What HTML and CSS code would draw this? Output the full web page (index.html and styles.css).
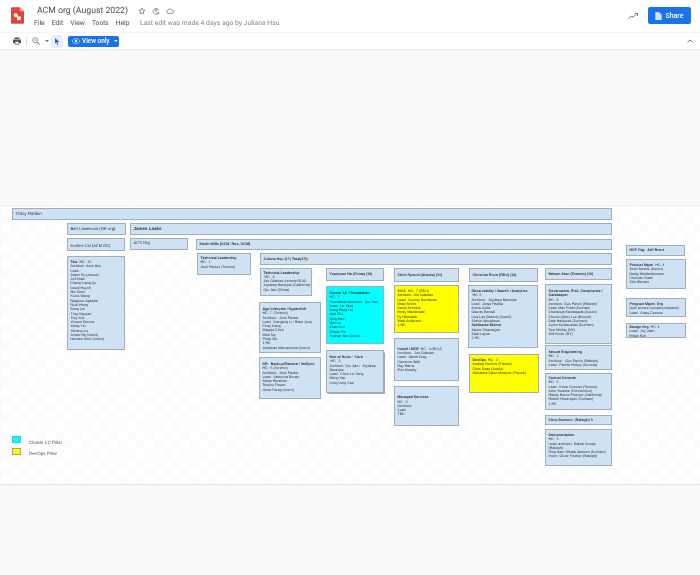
FILE: index.html
```html
<!DOCTYPE html>
<html lang="en">
<head>
<meta charset="utf-8">
<title>ACM org (August 2022)</title>
<link rel="stylesheet" href="styles.css">
</head>
<body>
<header class="topbar">
  <svg class="logo" viewBox="0 0 14 18"><path d="M1.2 0H9.5L14 4.5V16.8C14 17.5 13.5 18 12.8 18H1.2C.5 18 0 17.5 0 16.8V1.2C0 .5.5 0 1.2 0Z" fill="#e0453a"/><path d="M9.5 0L14 4.5H9.5Z" fill="#f2a49c"/><circle cx="5.2" cy="8.8" r="2.1" fill="#fff"/><rect x="6.6" y="10" width="4" height="4" fill="#fff"/></svg>
  <div class="titles">
    <div class="title-row">
      <span class="doc-title">ACM org (August 2022)</span>
      <svg class="t-icon" viewBox="0 0 12 12"><path d="M6 1.4L7.3 4.6 10.7 4.9 8.1 7.1 8.9 10.4 6 8.6 3.1 10.4 3.9 7.1 1.3 4.9 4.7 4.6Z" fill="none" stroke="#5f6368"/></svg>
      <svg class="t-icon" viewBox="0 0 12 12"><path d="M9.5 9.5A4.4 4.4 0 1 1 10.2 5" fill="none" stroke="#5f6368"/><circle cx="6" cy="5" r="1.4" fill="none" stroke="#5f6368"/><path d="M7 9h4M9 7.5v3" stroke="#5f6368"/></svg>
      <svg class="t-icon" viewBox="0 0 12 12"><path d="M3.2 9.5A2.4 2.4 0 0 1 3 4.8 3.2 3.2 0 0 1 9 4.9 2.3 2.3 0 0 1 9 9.5Z" fill="none" stroke="#5f6368"/></svg>
    </div>
    <div class="menu-row">
      <nav class="menu"><span>File</span><span>Edit</span><span>View</span><span>Tools</span><span>Help</span></nav>
      <span class="last-edit">Last edit was made 4 days ago by Juliana Hsu</span>
    </div>
  </div>
  <div class="top-right">
    <svg class="trend" viewBox="0 0 12 8"><path d="M.5 7L3.5 4 5.5 5.5 9 2M7.5 1.2H10.5V4" fill="none" stroke="#5f6368"/></svg>
    <button class="share"><svg class="share-icon" viewBox="0 0 8 10"><path d="M0 0H4.5L8 3.5V10H0Z" fill="#cfe0fb"/></svg>Share</button>
  </div>
</header>
<div class="toolbar">
  <svg class="print" viewBox="0 0 10 9"><path d="M2 0H8V2H2ZM0 2.6H10V7H8V9H2V7H0Z" fill="#50545a"/><rect x="3" y="5.5" width="4" height="2.5" fill="#fff"/></svg>
  <span class="sep"></span>
  <svg class="zoom" viewBox="0 0 9 9"><circle cx="3.6" cy="3.6" r="2.8" fill="none" stroke="#80868b"/><path d="M5.8 5.8L8.6 8.6" stroke="#80868b" stroke-width="1.2"/><path d="M2.2 3.6H5" stroke="#80868b" stroke-width=".7"/></svg>
  <span class="caret"></span>
  <span class="pointer"><svg viewBox="0 0 7 9"><path d="M1 0L6.5 5H3.8L5.2 8.2 4 8.8 2.7 5.6 1 7.2Z" fill="#1a5fc4"/></svg></span>
  <button class="view-only"><svg viewBox="0 0 10 7"><path d="M5 .5C7.3.5 9 2 9.8 3.5 9 5 7.3 6.5 5 6.5S1 5 .2 3.5C1 2 2.7.5 5 .5Z" fill="none" stroke="#e8f0fe" stroke-width=".8"/><circle cx="5" cy="3.5" r="1.5" fill="#e8f0fe"/></svg>View only<span class="caret white"></span></button>
  <svg class="chev" viewBox="0 0 8 5"><path d="M.8 4.2L4 1 7.2 4.2" fill="none" stroke="#5f6368" stroke-width="1.3"/></svg>
</div>
<main class="stage">
  <section class="sheet">
    <div class="node mid big n-tracy"><b class="plain">Tracy Rankin</b></div>
    <div class="node mid n-ben"><b class="plain">Ben Lowenson (GE org)</b></div>
    <div class="node mid big n-james"><b>James Laaks</b></div>
    <div class="node end n-eveline"><b class="plain">Eveline Cal (ACM GE)</b></div>
    <div class="node n-acm">ACS Org</div>
    <div class="node mid n-kevin"><b>Kevin Mills (ACM, Rox, OCM)</b></div>
    <div class="node n-test"><b>Test</b>&nbsp; HC:&nbsp; 15<br>Architect: Asim Butt<br>Lead:<br>Adam Krzyhowski<br>Atif Shafi<br>Chang Liang Qu<br>David Huynh<br>Hui Chen<br>Kurtis Wang<br>Nagpooz Agbebe<br>Ruixi Hong<br>Song Lai<br>Thuy Nguyen<br>Ting Xue<br>Vincent Boutos<br>Xiang Yin<br>Yehang Liu<br>Aimee Ng (intern)<br>Ishmam Amin (intern)</div>
    <div class="node n-tl1"><b>Technical Leadership</b><br>HC:&nbsp; 1<br>Josh Packer (Toronto)</div>
    <div class="node mid n-juliana"><b>Juliana Hsu (1?) Total(47))</b></div>
    <div class="node n-tl2"><b>Technical Leadership</b><br>&nbsp;HC:&nbsp; 3<br>Joe Gdaniec (remote RDU)<br>Joydeep Banerjee (California)<br>Qiu Jian (China)</div>
    <div class="node mid n-yuan"><b>Yuanyuan He (China) (10)</b></div>
    <div class="node tall cyan n-cluster"><b>Cluster LC / Foundation</b><br>HC:&nbsp; 7<br>Foundation Architect:&nbsp; Qiu Jian<br>Lead:&nbsp; Le Yang<br>Dang Peng Liu<br>Jian Zhu<br>Qing Hao<br>Wei Liu<br>Zhao Sun<br>Zhiwei Yin<br>Yuchen Yao (intern)</div>
    <div class="node tall n-app"><b>App Lifecycle / Hypershift</b><br>HC: 7&nbsp; (Toronto)<br>Architect:&nbsp; Josh Packer<br>Lead:&nbsp; Xiangjing Li / Roke Jung<br>Feng Xiang<br>Maggie Chen<br>Mike Ng<br>Philip Wu<br>1 HC<br>Jonathan Marcantonio (intern)</div>
    <div class="node tall n-dr"><b>DR:&nbsp; Backup/Restore / VolSync</b><br>HC:&nbsp; 5 (Toronto)<br>Architect:&nbsp; Josh Packer<br>Lead:&nbsp; Valentina Birsan<br>Sahar Ebrahimi<br>Tesshu Flower<br>Omar Farag (intern)</div>
    <div class="node tall n-hub shadow"><b>Hub of Hubs /&nbsp; Core</b><br>&nbsp;HC:&nbsp; 3<br>Architect: Qiu Jian /&nbsp; Joydeep Banerjee<br>Lead:&nbsp; Chun Lin Yang<br>Meng Yan<br>Long Long Cao</div>
    <div class="node mid n-chris"><b>Chris Rynum (Atlanta) (31)</b></div>
    <div class="node yellow n-bios"><b class="plain">BIOS</b>&nbsp; HC:&nbsp; 7 (RDU)<br>Architect: Joe Gdaniec<br>Lead:&nbsp; Gurney Buchanan<br>Brian Smith<br>David Schmidt<br>Emily Macdonald<br>Kyl Bempah<br>Mark Anderson<br>1 HC</div>
    <div class="node mid n-install"><span><b>Install / MCE</b>&nbsp; HC:&nbsp; 4 (RDU)<br>Architect:&nbsp; Joe Gdaniec<br>Lead:&nbsp; Jakob Gray<br>Cameron Wall<br>Ray Harris<br>Erin Murphy</span></div>
    <div class="node mid n-managed"><span><b>Managed Services</b><br>HC:&nbsp; 0<br>Architect:<br>Lead:<br>TBD</span></div>
    <div class="node mid n-christine"><b>Christine Rizzo (RDU) (12)</b></div>
    <div class="node n-obs"><b>Observability / Search / Analytics</b><br>&nbsp;HC: 5<br>Architect:&nbsp; Joydeep Banerjee<br>Lead:&nbsp; Jorge Padilla<br>Aneta Cuba<br>Gaurav Bansal<br>Ling Lan (Marco) (Austin)<br>Sherin Varughese<br><b>Sahibarao Mishut</b><br>Xavier Dhamaiyan<br>Zack Layne<br>1 HC</div>
    <div class="node yellow n-devops"><b>DevOps</b>&nbsp; HC:&nbsp; 3<br>Andrea Decorte (France)<br>Chris Doan (Austin)<br>Salvatore Dario Minonne (France)</div>
    <div class="node mid n-nelson"><b>Nelson Jean (Toronto) (16)</b></div>
    <div class="node n-gov"><b>Governance, Risk, Compliance / Gatekeeper</b><br>HC:&nbsp; 8<br>Architect: Gus Parvin (Raleigh)<br>Lead: Matt Prahl (Durham)<br>Chaitanya Kandagatla (Austin)<br>Chunxi (Alex) Luo (Boston)<br>Dale Haiducek (Durham)<br>Justin Kulikauskas (Durham)<br>Tom McKay (NY)<br>Will Kutler (NY)</div>
    <div class="node n-secure"><b>Secure Engineering</b><br>HC:&nbsp; 1<br>Architect:&nbsp; Gus Parvin (Raleigh)<br>Lead:&nbsp; Patrick Hickey (Arizona)</div>
    <div class="node n-central"><b>Central Console</b><br>HC:&nbsp; 5<br>Lead:&nbsp; Kevin Cormier (Toronto)<br>John Swanke (Connecticut)<br>Randy Bruno-Piverger (California)<br>Robert Hoetington (Durham)<br>1 HC</div>
    <div class="node mid n-damson"><b>Chris Damson&nbsp; (Raleigh) 3</b></div>
    <div class="node n-doc"><b>Documentation</b><br>HC:&nbsp; 2<br>Lead, architect: Brandi Swope (Raleigh)<br>Ring lead: Mikala Jackson (Durham)<br>Intern: Oliver Fischer (Raleigh)</div>
    <div class="node mid n-hcp"><b>HCP Org:&nbsp; Jeff Brent</b></div>
    <div class="node n-product"><b>Product Mgmt</b>&nbsp; HC: 4<br>Scott Berens (Austin)<br>Brady Weiderdenmoe<br>Christian Stark<br>Sho Weimer</div>
    <div class="node n-program"><b>Program Mgmt: Org</b><br>(split across multiple programs)<br>Lead:&nbsp; Stacy Cannon</div>
    <div class="node n-design"><b>Design Org</b>&nbsp; HC: 1<br>Lead:&nbsp; Joy Jean<br>Ethan Kim</div>
    <span class="swatch swatch-cyan"></span><span class="legend legend-cyan">Cluster LC Pillar</span>
    <span class="swatch swatch-yellow"></span><span class="legend legend-yellow">DevOps Pillar</span>
  </section>
</main>
</body>
</html>
```
FILE: styles.css
```css
* { box-sizing: border-box; }
html, body { height: 100%; }
body {
  margin: 0;
  width: 700px;
  height: 575px;
  overflow: hidden;
  display: flex;
  flex-direction: column;
  background: #f8f9fa;
  font-family: Roboto, "Liberation Sans", sans-serif;
  color: #3c4043;
  text-rendering: geometricPrecision;
}
.topbar {
  height: 32px;
  flex: none;
  display: flex;
  align-items: flex-start;
  background: #fff;
  padding: 7px 9px 0 11px;
  filter: blur(.25px);
}
.logo { width: 13px; height: 17px; flex: none; }
.titles { margin-left: 12px; margin-top: -3px; }
.title-row { display: flex; align-items: center; height: 13px; }
.doc-title { font-size: 8.7px; color: #4a4d52; margin-left: 1px; margin-right: 10px; white-space: nowrap; }
.t-icon { width: 8px; height: 8px; margin-right: 6px; flex: none; }
.menu-row { display: flex; align-items: center; height: 9px; margin-top: 1.5px; font-size: 6.8px; margin-left: -2px; }
.menu { display: flex; gap: 7px; color: #4a4d52; width: 106px; }
.last-edit { color: #80868b; white-space: nowrap; }
.top-right { margin-left: auto; display: flex; align-items: center; gap: 9px; }
.trend { width: 11px; height: 8px; margin-top: 1px; }
.share {
  width: 43px;
  height: 17px;
  border: 0;
  border-radius: 2px;
  background: #1a73e8;
  color: #fff;
  font: 500 7px Roboto, sans-serif;
  display: flex;
  align-items: center;
  justify-content: center;
  gap: 3px;
  padding: 0;
}
.share-icon { width: 7px; height: 8px; }
.toolbar {
  height: 18px;
  flex: none;
  display: flex;
  align-items: center;
  padding: 0 6px 0 13px;
  background: #fff;
  border-top: 1px solid #f1f3f4;
  border-bottom: 1px solid #e8eaed;
  filter: blur(.25px);
}
.print { width: 8px; height: 8px; }
.sep { width: 1px; height: 9px; background: #e0e0e0; margin: 0 5px; }
.zoom { width: 8px; height: 8px; }
.caret {
  width: 0;
  height: 0;
  border-left: 2px solid transparent;
  border-right: 2px solid transparent;
  border-top: 2px solid #5f6368;
  margin-left: 5px;
}
.caret.white { border-top-color: #fff; margin-left: 3px; }
.pointer {
  width: 12px;
  height: 13px;
  margin-left: 2px;
  background: #e8f0fe;
  border-radius: 2px;
  display: flex;
  align-items: center;
  justify-content: center;
}
.pointer svg { width: 6px; height: 7px; }
.view-only {
  width: 51px;
  height: 11px;
  margin-left: 5px;
  border: 0;
  border-radius: 2px;
  background: #1a73e8;
  color: #fff;
  font: 500 6.4px Roboto, sans-serif;
  display: flex;
  align-items: center;
  padding: 0 0 0 4px;
  gap: 2px;
}
.view-only svg { width: 8px; height: 6px; }
.chev { width: 6px; height: 4px; margin-left: auto; margin-right: 1px; }
.stage { flex: 1; padding: 155px 0 0 1px; }
.sheet {
  position: relative;
  width: 699px;
  height: 280px;
  background-color: #fff;
  background-image: conic-gradient(#fcfcfc 25%, #fff 0 50%, #fcfcfc 0 75%, #fff 0);
  background-size: 18px 18px;
  border-top: 1px solid #eceef0;
  border-bottom: 1px solid #dfe1e4;
  font-family: "Liberation Sans", Arial, sans-serif;
  font-size: 3.55px;
  line-height: 4.3px;
  color: #2f3235;
  filter: blur(.2px);
}
.node {
  position: absolute;
  background: #cfe2f3;
  border: 1px solid #a0aebb;
  padding: 2px 0 2px 2.5px;
  overflow: hidden;
}
.node b { font-weight: 700; }
.node b.plain { font-weight: 400; }
.node.mid { display: flex; align-items: center; }
.node.end { display: flex; align-items: flex-end; }
.node.tall { padding-top: 4px; }
.cyan { background: #00ffff; }
.yellow { background: #ffff00; }
.shadow { box-shadow: .5px .5px 1px #a5a8ab; }
.big { font-size: 4.5px; }
.n-tracy { left: 11px; top: 2px; width: 600px; height: 12px; }
.n-ben { left: 66px; top: 17px; width: 59px; height: 12px; font-size: 4.2px; }
.n-james { left: 129px; top: 17px; width: 482px; height: 12px; }
.n-eveline { left: 66px; top: 32px; width: 58px; height: 13px; font-size: 4px; }
.n-acm { left: 129px; top: 32px; width: 58px; height: 12px; font-size: 4.1px; }
.n-kevin { left: 195px; top: 33px; width: 416px; height: 11px; font-size: 3.7px; }
.n-test { left: 66px; top: 50px; width: 58px; height: 94px; padding-top: 3px; }
.n-tl1 { left: 196px; top: 47px; width: 54px; height: 22px; }
.n-juliana { left: 259px; top: 47px; width: 352px; height: 12px; }
.n-tl2 { left: 259px; top: 62px; width: 52px; height: 28px; padding-top: 1.5px; white-space: nowrap; }
.n-yuan { left: 325px; top: 62px; width: 58px; height: 13px; }
.n-cluster { left: 325px; top: 80px; width: 58px; height: 58px; padding-top: 5px; }
.n-app { left: 258px; top: 96px; width: 62px; height: 51px; }
.n-dr { left: 258px; top: 151px; width: 62px; height: 42px; padding-top: 5px; }
.n-hub { left: 325px; top: 144px; width: 58px; height: 43px; padding-top: 5px; }
.n-chris { left: 393px; top: 62px; width: 65px; height: 14px; }
.n-bios { left: 393px; top: 79px; width: 65px; height: 48px; padding-top: 3px; }
.n-install { left: 393px; top: 132px; width: 65px; height: 43px; }
.n-managed { left: 393px; top: 180px; width: 65px; height: 40px; }
.n-christine { left: 468px; top: 62px; width: 69px; height: 14px; }
.n-obs { left: 467px; top: 79px; width: 70px; height: 63px; padding-top: 3px; }
.n-devops { left: 468px; top: 148px; width: 70px; height: 39px; padding-top: 3px; }
.n-nelson { left: 544px; top: 62px; width: 67px; height: 12px; }
.n-gov { left: 544px; top: 78px; width: 67px; height: 60px; padding-top: 4px; }
.n-secure { left: 544px; top: 139px; width: 67px; height: 25px; padding-top: 4px; }
.n-central { left: 544px; top: 167px; width: 67px; height: 37px; }
.n-damson { left: 544px; top: 209px; width: 67px; height: 10px; }
.n-doc { left: 544px; top: 223px; width: 67px; height: 37px; padding-top: 3px; }
.n-hcp { left: 625px; top: 39px; width: 59px; height: 11px; }
.n-product { left: 625px; top: 53px; width: 60px; height: 30px; padding-top: 3px; }
.n-program { left: 625px; top: 92px; width: 60px; height: 19px; padding-top: 3px; }
.n-design { left: 625px; top: 117px; width: 60px; height: 15px; padding-top: 1px; }
.swatch { position: absolute; left: 11px; width: 9px; height: 7px; border: 1px solid #a5a560; }
.swatch-cyan { top: 230px; background: #00ffff; border-color: #55c0c8; }
.swatch-yellow { top: 242px; background: #ffff00; }
.legend { position: absolute; left: 28px; font-size: 4.6px; color: #55595e; white-space: nowrap; }
.legend-cyan { top: 235px; }
.legend-yellow { top: 246px; }
```
